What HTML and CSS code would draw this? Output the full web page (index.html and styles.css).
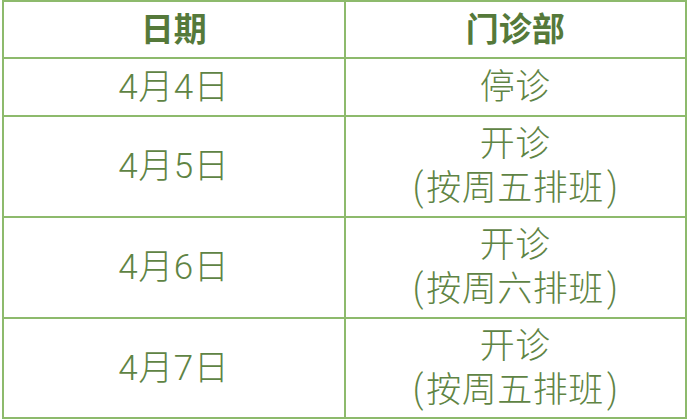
FILE: index.html
```html
<!DOCTYPE html>
<html lang="zh">
<head>
<meta charset="utf-8">
<link rel="stylesheet" href="styles.css">
</head>
<body>
<table class="schedule">
  <thead>
    <tr class="head-row"><th>日期</th><th>门诊部</th></tr>
  </thead>
  <tbody>
    <tr class="row-single"><td>4月4日</td><td>停诊</td></tr>
    <tr class="row-double"><td>4月5日</td><td>开诊<br><span class="paren">(</span>按周五排班<span class="paren">)</span></td></tr>
    <tr class="row-double"><td>4月6日</td><td>开诊<br><span class="paren">(</span>按周六排班<span class="paren">)</span></td></tr>
    <tr class="row-double row-last"><td>4月7日</td><td>开诊<br><span class="paren">(</span>按周五排班<span class="paren">)</span></td></tr>
  </tbody>
</table>
</body>
</html>
```
FILE: styles.css
```css
html, body {
  margin: 0;
  padding: 0;
  background: #ffffff;
}
.schedule {
  border-collapse: collapse;
  width: 685px;
  margin: 0 0 0 2px;
  table-layout: fixed;
  font-family: Roboto, "Noto Sans CJK SC", sans-serif;
  color: #5f8444;
}
.schedule th,
.schedule td {
  border: 2px solid #8dba6c;
  text-align: center;
  vertical-align: middle;
  padding: 0;
  font-size: 35px;
  font-weight: 300;
  line-height: 43px;
}
.schedule td {
  letter-spacing: 0.5px;
}
.schedule th {
  font-weight: bold;
  font-size: 33px;
  color: #55793a;
  height: 55px;
}
.paren {
  display: inline-block;
  font-size: 38px;
  transform: scaleX(0.85);
  padding: 0 2px;
}
.row-single td {
  height: 56px;
}
.row-double td {
  height: 99px;
}
.row-last td {
  height: 98px;
}
```
